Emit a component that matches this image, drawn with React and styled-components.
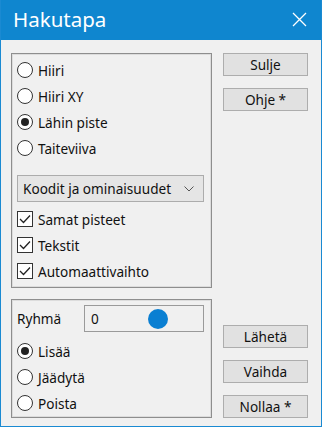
import styled, { createGlobalStyle } from 'styled-components';

const GlobalStyle = createGlobalStyle`
  html, body { margin: 0; padding: 0; background: #f0f0f0; }
  * { box-sizing: border-box; }
`;

const Window = styled.div`
  width: 322px;
  height: 427px;
  border: 1px solid #1a8ad2;
  border-top: none;
  background: #f0f0f0;
  font-family: "Noto Sans", "Open Sans", sans-serif;
  font-size: 13.6px;
  color: #111;
  display: flex;
  flex-direction: column;
`;

const TitleBar = styled.div`
  height: 40px;
  background: #0f86cf;
  display: flex;
  align-items: center;
  justify-content: space-between;
  padding: 0 14px 2px 12px;
  color: #fff;
  font-size: 20.5px;
`;

const Body = styled.div`
  flex: 1;
  display: flex;
  gap: 11px;
  padding: 13px 13px 8px 10px;
`;

const LeftCol = styled.div`
  width: 201px;
  display: flex;
  flex-direction: column;
  gap: 11px;
`;

const Group = styled.div`
  border: 1px solid #8e8e8e;
  box-shadow: inset 0 0 0 1px #dcdcdc;
  padding: ${p => p.$pad};
  display: flex;
  flex-direction: column;
  height: ${p => p.$h}px;
`;

const Row = styled.label`
  height: 26px;
  display: flex;
  align-items: center;
  gap: 5px;
`;

const RadioMark = styled.span`
  width: 16px;
  height: 16px;
  border-radius: 50%;
  border: 1px solid #333;
  background: #fff;
  display: flex;
  align-items: center;
  justify-content: center;
  &::after {
    content: '';
    width: 8px;
    height: 8px;
    border-radius: 50%;
    background: ${p => (p.$on ? '#222' : 'transparent')};
  }
`;

const CheckMark = styled.span`
  width: 16px;
  height: 16px;
  border: 1px solid #333;
  background: #fff;
  display: flex;
  align-items: center;
  justify-content: center;
`;

const Select = styled.div`
  margin: 14px 2px 4px 0;
  height: 27px;
  background: #e5e5e5;
  border: 1px solid #acacac;
  display: flex;
  align-items: center;
  justify-content: space-between;
  padding: 0 9px 0 5px;
`;

const GroupRow = styled.div`
  height: 27px;
  display: flex;
  align-items: center;
  justify-content: space-between;
  margin-bottom: 6px;
  padding-right: 2px;
`;

const Field = styled.div`
  width: 120px;
  height: 27px;
  border: 1px solid #9a9a9a;
  background: #f0f0f0;
  position: relative;
  display: flex;
  align-items: center;
  padding-left: 6px;
`;

const Knob = styled.span`
  position: absolute;
  left: 63px;
  top: 3px;
  width: 20px;
  height: 20px;
  border-radius: 50%;
  background: #0a7fd2;
`;

const RightCol = styled.div`
  width: 85px;
  display: flex;
  flex-direction: column;
  justify-content: space-between;
`;

const ButtonStack = styled.div`
  display: flex;
  flex-direction: column;
  gap: ${p => p.$gap}px;
`;

const Button = styled.div`
  height: 23px;
  background: #e1e1e1;
  border: 1px solid #adadad;
  display: flex;
  align-items: center;
  justify-content: center;
`;

function Radio({ on, children }) {
  return (
    <Row>
      <RadioMark $on={on} />
      {children}
    </Row>
  );
}

function Check({ children }) {
  return (
    <Row>
      <CheckMark>
        <svg width="12" height="10" viewBox="0 0 12 10">
          <path d="M1 5 L4.5 8.5 L11 1.5" fill="none" stroke="#222" strokeWidth="1.3" />
        </svg>
      </CheckMark>
      {children}
    </Row>
  );
}

export default function App() {
  return (
    <>
      <GlobalStyle />
      <Window>
        <TitleBar>
          <span>Hakutapa</span>
          <svg width="15" height="15" viewBox="0 0 15 15">
            <path d="M1 1 L14 14 M14 1 L1 14" stroke="#fff" strokeWidth="1.3" />
          </svg>
        </TitleBar>
        <Body>
          <LeftCol>
            <Group $pad="3px 5px" $h={235}>
              <Radio>Hiiri</Radio>
              <Radio>Hiiri XY</Radio>
              <Radio on>Lähin piste</Radio>
              <Radio>Taiteviiva</Radio>
              <Select>
                <span>Koodit ja ominaisuudet</span>
                <svg width="10" height="6" viewBox="0 0 10 6">
                  <path d="M0.5 0.5 L5 5 L9.5 0.5" fill="none" stroke="#555" strokeWidth="1" />
                </svg>
              </Select>
              <Check>Samat pisteet</Check>
              <Check>Tekstit</Check>
              <Check>Automaattivaihto</Check>
            </Group>
            <Group $pad="5px 5px 1px" $h={119}>
              <GroupRow>
                <span>Ryhmä</span>
                <Field>
                  0
                  <Knob />
                </Field>
              </GroupRow>
              <Radio on>Lisää</Radio>
              <Radio>Jäädytä</Radio>
              <Radio>Poista</Radio>
            </Group>
          </LeftCol>
          <RightCol>
            <ButtonStack $gap={12}>
              <Button>Sulje</Button>
              <Button>Ohje *</Button>
            </ButtonStack>
            <ButtonStack $gap={12}>
              <Button>Lähetä</Button>
              <Button>Vaihda</Button>
              <Button>Nollaa *</Button>
            </ButtonStack>
          </RightCol>
        </Body>
      </Window>
    </>
  );
}
